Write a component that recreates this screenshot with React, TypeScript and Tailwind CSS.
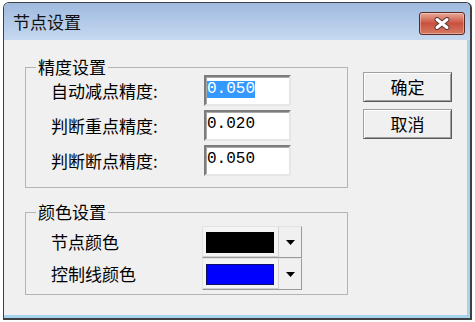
import React from "react";

const cjk = { fontFamily: '"Noto Sans CJK SC", "Noto Sans", sans-serif' };
const mono = { fontFamily: '"Liberation Mono", "DejaVu Sans Mono", monospace' };

function Field({ value, selected }: { value: string; selected?: boolean }) {
  return (
    <div className="w-[87px] h-[31px] bg-white border-2 border-t-[#7c7c7c] border-l-[#7c7c7c] border-r-[#e6e6e6] border-b-[#e6e6e6] shadow-[inset_1px_1px_0_#a8a8a8] flex items-center pl-[1px] pb-[2px]">
      <span
        className={
          "text-[16px] leading-[17px] " +
          (selected ? "bg-[#3399ff] text-white" : "text-black")
        }
        style={mono}
      >
        {value}
      </span>
    </div>
  );
}

function Button({ label }: { label: string }) {
  return (
    <div
      className="w-[89px] h-[30px] bg-[#f0f0f0] border border-t-[#a0a0a0] border-l-[#a0a0a0] border-r-[#5a5a5a] border-b-[#5a5a5a] shadow-[inset_1px_1px_0_#ffffff,inset_-1px_-1px_0_#a0a0a0] flex items-center justify-center text-[17px] text-black"
      style={cjk}
    >
      {label}
    </div>
  );
}

function ColorCombo({ color, bordered }: { color: string; bordered?: boolean }) {
  return (
    <div className="w-[100px] h-[32px] flex border border-t-[#e3e3e3] border-l-[#e3e3e3] border-r-[#9a9a9a] border-b-[#9a9a9a] shadow-[inset_-1px_-1px_0_#d0d0d0] bg-[#f4f4f4]">
      <div className="flex-1 flex items-center pl-[3px]">
        <div
          className={"w-[68px] h-[21px] " + (bordered ? "border border-[#101060]" : "")}
          style={{ backgroundColor: color }}
        />
      </div>
      <div className="w-[23px] border-l border-[#d2d2d2] bg-[#f0f0f0] flex items-center justify-center">
        <svg width="9" height="5" viewBox="0 0 9 5">
          <polygon points="0,0 9,0 4.5,5" fill="#000" />
        </svg>
      </div>
    </div>
  );
}

export default function App() {
  return (
    <div className="w-[475px] h-[322px] bg-white pt-[2px] pl-[3px] pr-[3px] pb-[2px]">
      <div className="h-full flex flex-col border border-[#3f3f3f] border-r-2 border-b-2 rounded-t-[6px] overflow-hidden">
        {/* Title bar */}
        <div className="h-[37px] shrink-0 flex items-start justify-between bg-gradient-to-b from-[#9fbadf] to-[#c6d9f0]">
          <div className="pl-[9px] pt-[8px] text-[17px] leading-[22px] text-[#111]" style={cjk}>
            节点设置
          </div>
          <div className="mt-[9px] mr-[5px] w-[46px] h-[23px] rounded-[3px] border border-[#5a2a24] bg-gradient-to-b from-[#e9a898] via-[#c9503f] to-[#d77a62] shadow-[inset_0_0_0_1px_rgba(255,255,255,0.35)] flex items-center justify-center">
            <svg width="18" height="13" viewBox="0 0 18 13">
              <path d="M4 2.5 L14 10.5 M14 2.5 L4 10.5" stroke="#5a3a36" strokeWidth="5" strokeLinecap="round" />
              <path d="M4 2.5 L14 10.5 M14 2.5 L4 10.5" stroke="#ffffff" strokeWidth="3" strokeLinecap="round" />
            </svg>
          </div>
        </div>

        {/* Client */}
        <div className="flex-1 bg-[#f0f0f0] border-r-[3px] border-b-[3px] border-[#a6d3ec] flex items-start">
          <div className="ml-[21px] pt-[19px] flex flex-col">
            <fieldset className="w-[323px] border border-[#b4b4b4] pb-[11px]">
              <legend className="ml-[10px] px-[2px] text-[17px] leading-[16px] text-black" style={cjk}>
                精度设置
              </legend>
              <div className="flex flex-col gap-[4px]">
                <div className="flex items-center">
                  <div className="w-[178px] pl-[25px] text-[17px] text-black" style={cjk}>自动减点精度:</div>
                  <Field value="0.050" selected />
                </div>
                <div className="flex items-center">
                  <div className="w-[178px] pl-[25px] text-[17px] text-black" style={cjk}>判断重点精度:</div>
                  <Field value="0.020" />
                </div>
                <div className="flex items-center">
                  <div className="w-[178px] pl-[25px] text-[17px] text-black" style={cjk}>判断断点精度:</div>
                  <Field value="0.050" />
                </div>
              </div>
            </fieldset>

            <fieldset className="mt-[16px] w-[323px] border border-[#b4b4b4] pt-[6px] pb-[4px]">
              <legend className="ml-[10px] px-[2px] text-[17px] leading-[16px] text-black" style={cjk}>
                颜色设置
              </legend>
              <div className="flex flex-col">
                <div className="flex items-center">
                  <div className="w-[176px] pl-[25px] text-[17px] text-black" style={cjk}>节点颜色</div>
                  <ColorCombo color="#000000" />
                </div>
                <div className="flex items-center">
                  <div className="w-[176px] pl-[25px] text-[17px] text-black" style={cjk}>控制线颜色</div>
                  <ColorCombo color="#0000ff" bordered />
                </div>
              </div>
            </fieldset>
          </div>

          <div className="ml-[15px] pt-[32px] flex flex-col gap-[7px]">
            <Button label="确定" />
            <Button label="取消" />
          </div>
        </div>
      </div>
    </div>
  );
}
